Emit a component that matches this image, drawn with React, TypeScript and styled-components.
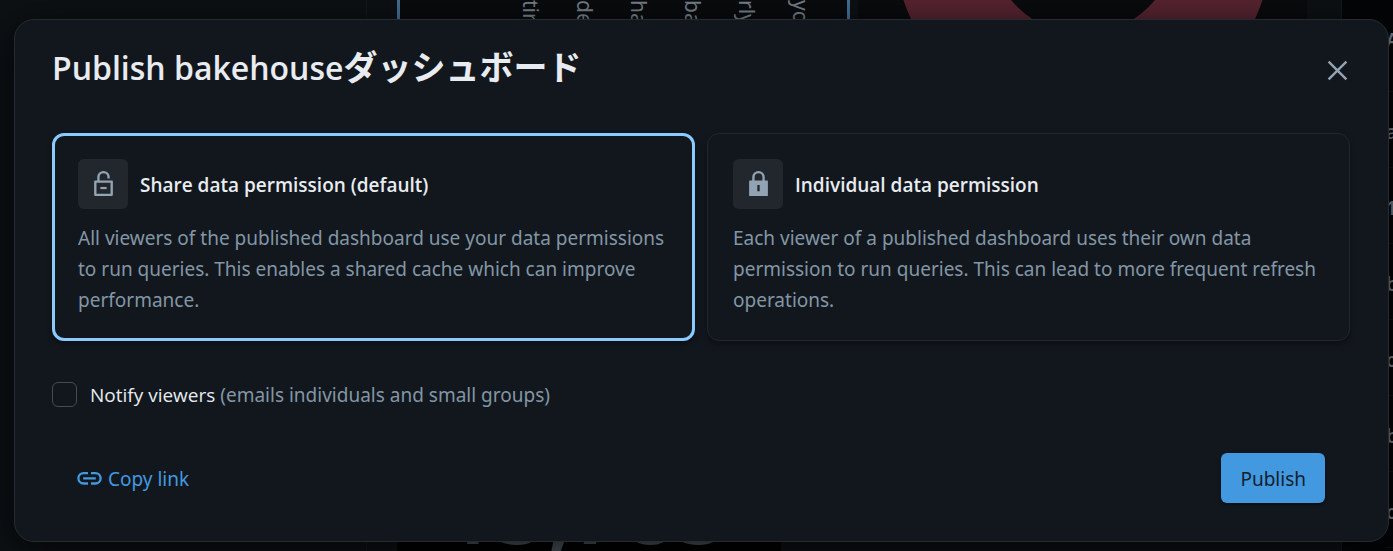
import React, { useState } from "react";
import styled, { createGlobalStyle, css } from "styled-components";

const Global = createGlobalStyle`
  *, *::before, *::after { box-sizing: border-box; }
  html, body { margin: 0; background: #030507; }
  body { overflow: hidden; }
  body, button, input {
    font-family: "Noto Sans", "Open Sans", "Noto Sans CJK JP", sans-serif;
  }
`;

const headingFont = `"Open Sans", "Noto Sans", "Noto Sans CJK JP", sans-serif`;

const Page = styled.div`
  position: relative;
  min-height: 100vh;
  overflow: hidden;
  display: flex;
  flex-direction: column;
`;

const Backdrop = styled.div`
  position: absolute;
  inset: 0;
  display: flex;
  background: #0d1114;
  color: #78828b;
  overflow: hidden;
`;

const SideArea = styled.div`
  flex: 0 0 367px;
  border-right: 1px solid #14191d;
`;

const Canvas = styled.div`
  flex: 1;
  display: flex;
  flex-direction: column;
  justify-content: space-between;
  padding-left: 30px;
`;

const WidgetRow = styled.div`
  display: flex;
  gap: 8px;
  height: 60px;
`;

const LabelWidget = styled.div`
  flex: 0 0 453px;
  display: flex;
  gap: 30px;
  padding-left: 119px;
  background: #090b0e;
  border: solid #467298;
  border-width: 0 3px;
`;

const AxisLabel = styled.span`
  writing-mode: vertical-rl;
  width: 24px;
  font-size: 21px;
  line-height: 24px;
`;

const DonutWidget = styled.div`
  flex: 1;
  background: #090b0e;
`;

const Donut = styled.svg`
  display: block;
  width: 100%;
  height: 60px;
`;

const CounterWidget = styled.div`
  display: flex;
  align-items: flex-end;
  height: 84px;
  width: 384px;
  padding-left: 46px;
  background: #020304;
  color: #4b545d;
  font-size: 91px;
  font-weight: 600;
  line-height: 84px;
`;

const RightArea = styled.div`
  flex: 0 0 52px;
  min-width: 0;
  overflow: hidden;
  margin-left: 34px;
  padding-left: 44px;
  border-left: 1px solid #14191d;
  background: #030507;
  font-size: 19px;
  font-weight: 600;
`;

const ListItem = styled.div<{ $tall?: boolean }>`
  height: ${(p) => (p.$tall ? 92 : 76)}px;
  line-height: 24px;
  padding-top: 28px;
  border-bottom: 1px solid #0c1013;
  white-space: nowrap;
`;

const Dialog = styled.section`
  position: relative;
  margin: 19px 4px 9px 14px;
  padding: 24px 38px 38px 37px;
  border: 1px solid #242c32;
  border-radius: 20px;
  background: #12171e;
  color: #e8ecf0;
  box-shadow: 0 8px 40px rgba(0, 0, 0, 0.7);
`;

const Header = styled.header`
  display: flex;
  align-items: center;
  justify-content: space-between;
  height: 50px;
`;

const Title = styled.h1`
  margin: 0;
  padding-bottom: 2px;
  font-family: ${headingFont};
  font-size: 32px;
  font-weight: 600;
  line-height: 48px;
`;

const TitleName = styled.span`
  font-family: "Noto Sans CJK JP", sans-serif;
  font-size: 34px;
  font-weight: 700;
  line-height: 40px;
`;

const CloseButton = styled.button`
  display: flex;
  padding: 0;
  margin: 2px 2px 0 0;
  border: 0;
  background: none;
  color: #92a4b3;
  cursor: pointer;
`;

const Options = styled.div`
  display: grid;
  grid-template-columns: 1fr 1fr;
  gap: 12px;
  margin-top: 39px;
`;

const OptionCard = styled.button<{ $selected: boolean }>`
  display: flex;
  flex-direction: column;
  gap: 14px;
  text-align: left;
  color: inherit;
  background: #12171e;
  border-radius: 12px;
  cursor: pointer;
  box-shadow: 0 3px 6px rgba(0, 0, 0, 0.35);
  ${(p) =>
    p.$selected
      ? css`
          border: 3px solid #8acaff;
          padding: 23px 23px 22px;
        `
      : css`
          border: 1px solid #20262c;
          padding: 25px 25px 24px;
        `}
`;

const OptionHead = styled.span`
  display: flex;
  align-items: center;
  gap: 12px;
`;

const IconTile = styled.span`
  display: flex;
  align-items: flex-start;
  justify-content: center;
  width: 50px;
  height: 50px;
  padding-top: 12px;
  border-radius: 6px;
  background: #22272e;
  color: #92a4b3;
`;

const OptionTitle = styled.span`
  padding-top: 2px;
  font-family: ${headingFont};
  font-size: 19px;
  font-weight: 600;
  line-height: 31px;
`;

const OptionText = styled.span`
  color: #8396a5;
  font-size: 19px;
  line-height: 31px;
`;

const NotifyRow = styled.label`
  display: flex;
  align-items: center;
  gap: 13px;
  margin-top: 38px;
  font-size: 19px;
  line-height: 31px;
  cursor: pointer;
`;

const CheckBox = styled.input`
  appearance: none;
  width: 25px;
  height: 25px;
  margin: 0;
  border: 1px solid #444b53;
  border-radius: 6px;
  background: #12171e;
  &:checked {
    background: #4299e0;
  }
`;

const NotifyLabel = styled.span`
  font-family: ${headingFont};
  font-weight: 500;
  line-height: 29px;
  padding-top: 2px;
`;

const Hint = styled.span`
  font-family: "Noto Sans", sans-serif;
  color: #8396a5;
  font-weight: 400;
`;

const Footer = styled.footer`
  display: flex;
  align-items: center;
  justify-content: space-between;
  margin-top: 43px;
  padding: 0 25px;
`;

const CopyButton = styled.button`
  display: flex;
  align-items: center;
  gap: 6px;
  padding: 0;
  border: 0;
  background: none;
  color: #4299e0;
  font-size: 19px;
  line-height: 31px;
  cursor: pointer;
`;

const CopyText = styled.span`
  padding-top: 3px;
`;

const PublishButton = styled.button`
  height: 50px;
  padding: 3px 19px 0;
  border: 0;
  border-radius: 6px;
  background: #4299e0;
  color: #12212e;
  font-size: 19px;
  line-height: 31px;
  cursor: pointer;
  box-shadow: 0 2px 3px rgba(0, 0, 0, 0.4);
`;

const CloseIcon = () => (
  <svg width="21" height="21" viewBox="0 0 21 21" fill="none" stroke="currentColor" strokeWidth="2.4" aria-hidden="true">
    <path d="M1.6 1.6 19.4 19.4M19.4 1.6 1.6 19.4" />
  </svg>
);

const UnlockedIcon = () => (
  <svg width="25" height="25" viewBox="0 0 16 16" fill="currentColor" aria-hidden="true">
    <path d="M10 11.6H6V10.2h4z" />
    <path
      fillRule="evenodd"
      clipRule="evenodd"
      d="M4 6V4a4 4 0 0 1 8 0v.75h-1.5V4a2.5 2.5 0 0 0-5 0v2h7.75c.41 0 .75.34.75.75v8.5c0 .41-.34.75-.75.75H2.75A.75.75 0 0 1 2 15.25v-8.5C2 6.34 2.34 6 2.75 6zM3.5 7.5v7h9v-7z"
    />
  </svg>
);

const LockedIcon = () => (
  <svg width="25" height="25" viewBox="0 0 16 16" fill="currentColor" aria-hidden="true">
    <path
      fillRule="evenodd"
      clipRule="evenodd"
      d="M12 6V4a4 4 0 0 0-8 0v2H2.4a.4.4 0 0 0-.4.4v9.2c0 .22.18.4.4.4h11.2a.4.4 0 0 0 .4-.4V6.4a.4.4 0 0 0-.4-.4zM5.5 6V4a2.5 2.5 0 0 1 5 0v2zM7.25 13V9h1.5v4z"
    />
  </svg>
);

const LinkIcon = () => (
  <svg width="25" height="25" viewBox="0 0 25 25" fill="none" stroke="currentColor" strokeWidth="2.3" aria-hidden="true">
    <path d="M11 7.1H6.6a5 5 0 0 0 0 10.4H11M14 7.1h4.4a5 5 0 0 1 0 10.4H14M6.2 12.3h12.6" />
  </svg>
);

const axisLabels = ["tir", "de", "ha", "ba", "rly", "yo"];
const sideItems = ["a", "1", "bl", "o", "b", "o"];

const options = [
  {
    id: "shared",
    title: "Share data permission (default)",
    text: "All viewers of the published dashboard use your data permissions to run queries. This enables a shared cache which can improve performance.",
    Icon: UnlockedIcon,
  },
  {
    id: "individual",
    title: "Individual data permission",
    text: "Each viewer of a published dashboard uses their own data permission to run queries. This can lead to more frequent refresh operations.",
    Icon: LockedIcon,
  },
];

export default function App() {
  const [selected, setSelected] = useState("shared");

  return (
    <Page>
      <Global />
      <Backdrop aria-hidden="true">
        <SideArea />
        <Canvas>
          <WidgetRow>
            <LabelWidget>
              {axisLabels.map((label) => (
                <AxisLabel key={label}>{label}</AxisLabel>
              ))}
            </LabelWidget>
            <DonutWidget>
              <Donut viewBox="0 0 449 60" preserveAspectRatio="xMidYMin meet">
                <circle cx="225" cy="-59" r="141" fill="none" stroke="#582430" strokeWidth="96" />
              </Donut>
            </DonutWidget>
          </WidgetRow>
          <CounterWidget>15,785</CounterWidget>
        </Canvas>
        <RightArea>
          <ListItem $tall>A</ListItem>
          {sideItems.map((item, i) => (
            <ListItem key={i}>{item}</ListItem>
          ))}
        </RightArea>
      </Backdrop>

      <Dialog role="dialog" aria-labelledby="publish-title">
        <Header>
          <Title id="publish-title">
            Publish bakehouse<TitleName>ダッシュボード</TitleName>
          </Title>
          <CloseButton type="button" aria-label="Close">
            <CloseIcon />
          </CloseButton>
        </Header>

        <Options>
          {options.map(({ id, title, text, Icon }) => (
            <OptionCard
              key={id}
              type="button"
              aria-pressed={selected === id}
              $selected={selected === id}
              onClick={() => setSelected(id)}
            >
              <OptionHead>
                <IconTile>
                  <Icon />
                </IconTile>
                <OptionTitle>{title}</OptionTitle>
              </OptionHead>
              <OptionText>{text}</OptionText>
            </OptionCard>
          ))}
        </Options>

        <NotifyRow>
          <CheckBox type="checkbox" />
          <NotifyLabel>
            Notify viewers <Hint>(emails individuals and small groups)</Hint>
          </NotifyLabel>
        </NotifyRow>

        <Footer>
          <CopyButton type="button">
            <LinkIcon />
            <CopyText>Copy link</CopyText>
          </CopyButton>
          <PublishButton type="button">Publish</PublishButton>
        </Footer>
      </Dialog>
    </Page>
  );
}
